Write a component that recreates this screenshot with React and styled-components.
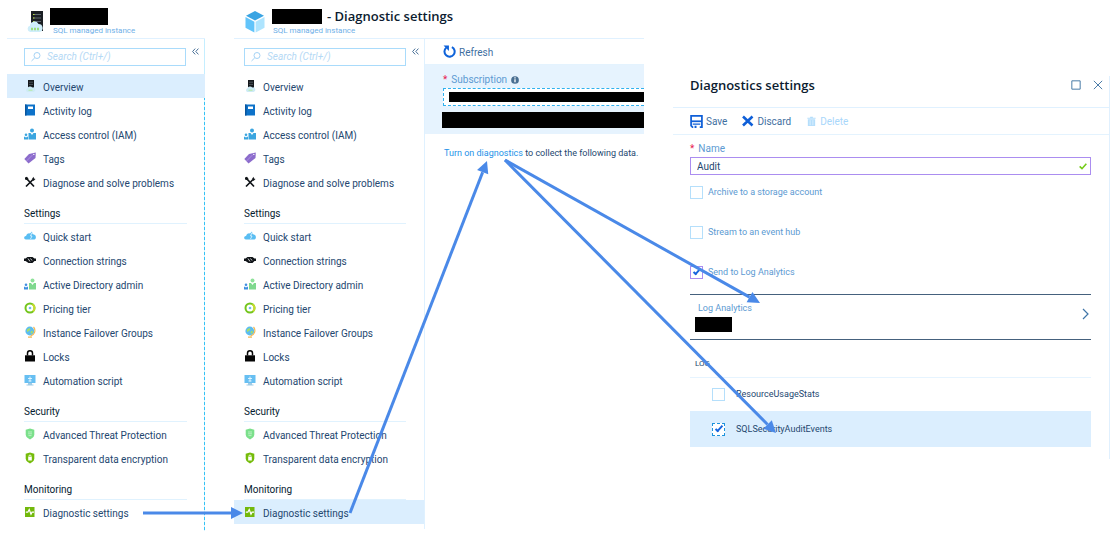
import React from "react";
import styled, { createGlobalStyle, css } from "styled-components";

const GlobalStyle = createGlobalStyle`
  *, *::before, *::after { box-sizing: border-box; }
  body {
    margin: 0;
    background: #fff;
    color: #24476f;
    font-family: Roboto, "Open Sans", sans-serif;
    font-size: 10px;
    line-height: 14px;
  }
  button, input { font: inherit; color: inherit; }
  a { color: inherit; text-decoration: none; }
  svg { display: block; flex: none; }
`;

const Page = styled.main`
  position: relative;
  display: flex;
  align-items: flex-start;
  gap: 29px;
  min-height: 537px;
  padding: 0 6px 0 7px;
`;

const Blade = styled.section`
  flex: ${(p) => p.$grow || 0} 0 ${(p) => p.$basis || "auto"};
  min-width: 0;
`;

const BladeHeader = styled.header`
  display: flex;
  gap: 7px;
  height: 39px;
  padding: ${(p) => p.$pad};
  border-bottom: 1px solid #e0f1ff;
`;

const HeaderIcon = styled.div`
  padding-top: 4px;
`;

const HeaderText = styled.div`
  display: flex;
  flex-direction: column;
`;

const TitleLine = styled.div`
  display: flex;
  align-items: center;
  gap: 5px;
  height: 18px;
`;

const Title = styled.h1`
  margin: 0;
  color: #0c1c30;
  font-family: "Open Sans", "Noto Sans", sans-serif;
  font-size: 13px;
  line-height: 18px;
  font-weight: 600;
  white-space: nowrap;
`;

const Subtitle = styled.p`
  margin: 0;
  padding-left: ${(p) => p.$indent}px;
  color: #6fb0e8;
  font-size: 8px;
  line-height: 12px;
`;

const Redacted = styled.span`
  display: block;
  width: ${(p) => p.$w}px;
  height: ${(p) => p.$h}px;
  background: #000;
`;

const MenuColumn = styled.nav`
  position: relative;
  flex: 0 0 ${(p) => p.$w}px;
  height: ${(p) => p.$h}px;
  border-right: 1px solid #dff1ff;
  ${(p) =>
    p.$dashed &&
    css`
      border-right: 0;
      background:
        linear-gradient(#c5eeff, #c5eeff) right 0 top 0 / 1px 53px no-repeat,
        repeating-linear-gradient(#35c3f5 0 3px, #d5f3ff 3px 5px) right 0 top 53px / 1px 100% no-repeat;
    `}
`;

const SearchRow = styled.div`
  display: flex;
  align-items: flex-start;
  gap: 6px;
  height: 35px;
  padding: 9px 0 0 ${(p) => p.$left}px;
`;

const SearchBox = styled.label`
  display: flex;
  align-items: center;
  gap: 5px;
  width: 162px;
  height: 18px;
  padding: 0 5px;
  border: 1px solid #a9dbfb;
`;

const SearchInput = styled.input`
  width: 100%;
  min-width: 0;
  padding: 0;
  border: 0;
  outline: 0;
  background: none;
  &::placeholder { color: #b5d9f5; font-style: italic; opacity: 1; }
`;

const PlainButton = styled.button`
  display: flex;
  align-items: center;
  gap: ${(p) => p.$gap || 0}px;
  padding: 0;
  border: 0;
  background: none;
  color: ${(p) => (p.disabled ? "#a8d7fb" : "#3f6f9f")};
`;

const ButtonText = styled.span`
  padding-top: 2px;
`;

const MenuList = styled.ul`
  margin: 0;
  padding: 0;
  list-style: none;
`;

const MenuLink = styled.a`
  display: flex;
  align-items: center;
  gap: 7px;
  height: 24px;
  padding-left: ${(p) => p.$left}px;
  background: ${(p) => (p.$active ? "#dbeefe" : "none")};
  white-space: nowrap;
`;

const MenuText = styled.span`
  padding-top: 3px;
`;

const MenuHeading = styled.h2`
  height: 30px;
  margin: 0 18px 0 ${(p) => p.$left}px;
  padding-top: 13px;
  border-bottom: 1px solid #e0f2fe;
  color: #061b30;
  font-size: 10px;
  line-height: 14px;
  font-weight: 400;
`;

const Columns = styled.div`
  display: flex;
`;

const Content = styled.div`
  flex: 1;
  min-width: 0;
`;

const Toolbar = styled.div`
  display: flex;
  align-items: center;
  gap: 15px;
  height: ${(p) => p.$h}px;
  padding-left: ${(p) => p.$left}px;
  border-bottom: 1px solid #e4f3fe;
`;

const SubscriptionArea = styled.div`
  display: flex;
  flex-direction: column;
  height: 69px;
  padding: 8px 0 6px 18px;
  background: #e6f3fe;
`;

const FieldLabel = styled.label`
  display: flex;
  align-items: center;
  gap: 4px;
  height: 14px;
  color: #5c9ad2;
  line-height: 14px;
`;

const Required = styled.span`
  color: #e8174f;
`;

const SubscriptionBox = styled.div`
  height: 18px;
  margin: 1px 0 6px;
  padding: 3px 0 3px 5px;
  border: 1px dashed #2fb1ef;
  border-right: 0;
  background: #fff;
`;

const SubscriptionInput = styled.input`
  display: block;
  width: 100%;
  height: 10px;
  padding: 0;
  border: 0;
  background: #000;
`;

const RedactedBar = styled.div`
  flex: 1;
  margin-left: -1px;
  background: #000;
`;

const Message = styled.p`
  margin: 12px 0 0;
  padding-left: 19px;
  font-size: 9px;
  line-height: 14px;
  white-space: nowrap;
  a { color: #2492e8; }
`;

const SettingsBlade = styled(Blade)`
  height: 383px;
  margin-top: 76px;
  border-right: 1px solid #e0f0fe;
`;

const SettingsHeader = styled.header`
  display: flex;
  align-items: center;
  gap: 12px;
  height: 32px;
  padding: 0 6px 13px 17px;
  border-bottom: 1px solid #e0f1ff;
`;

const HeaderSpacer = styled.span`
  flex: 1;
`;

const Form = styled.form`
  padding: 7px 18px 0 17px;
`;

const NameBox = styled.div`
  display: flex;
  align-items: center;
  height: 18px;
  margin-top: 1px;
  padding: 0 3px 0 6px;
  border: 1px solid #ab8df0;
`;

const NameInput = styled.input`
  flex: 1;
  min-width: 0;
  padding: 1px 0 0;
  border: 0;
  outline: 0;
  background: none;
`;

const CheckLabel = styled.label`
  display: flex;
  align-items: center;
  gap: ${(p) => p.$gap || 5}px;
  color: ${(p) => (p.$dark ? "#24476f" : "#5c9ad2")};
  font-size: 9px;
`;

const CheckList = styled.div`
  display: flex;
  flex-direction: column;
  gap: 26px;
  padding: 10px 0 15px;
`;

const CheckBox = styled.input.attrs({ type: "checkbox" })`
  appearance: none;
  width: 13px;
  height: 13px;
  margin: 0;
  border: 1px ${(p) => p.$line || "solid"} ${(p) => p.$color || "#b5dffb"};
  background: #fff;
  &:checked::before {
    content: "";
    display: block;
    width: 4px;
    height: 8px;
    margin: 0 0 0 4px;
    border: solid #1765de;
    border-width: 0 2px 2px 0;
    transform: rotate(42deg);
  }
`;

const Workspace = styled.a`
  display: flex;
  align-items: center;
  justify-content: space-between;
  height: 46px;
  padding: 0 0 6px 5px;
  border: solid #45617d;
  border-width: 1px 0;
  color: #5c9ad2;
  font-size: 9px;
`;

const WorkspaceText = styled.span`
  display: flex;
  flex-direction: column;
  gap: 2px;
  padding-top: 6px;
  line-height: 13px;
`;

const WorkspaceName = styled.span`
  padding-left: 3px;
`;

const LogTable = styled.table`
  width: 100%;
  border-collapse: collapse;
  th {
    height: 37px;
    padding: 12px 0 0 5px;
    border-bottom: 1px solid #e6f4ff;
    color: #24476f;
    font-size: 8px;
    font-weight: 400;
    line-height: 14px;
    text-align: left;
  }
`;

const LogCell = styled.td`
  height: ${(p) => (p.$active ? 36 : 34)}px;
  padding: 0 0 0 22px;
  background: ${(p) => (p.$active ? "#dbeefe" : "none")};
`;

const Arrows = styled.svg`
  position: absolute;
  inset: 0;
  width: 100%;
  height: 537px;
  pointer-events: none;
`;

const Svg = ({ size = 12, children }) => (
  <svg width={size} height={size} viewBox="0 0 12 12" fill="none" aria-hidden="true">
    {children}
  </svg>
);

const icons = {
  server: (
    <Svg>
      <path d="M4 0h6v8H4z" fill="#15181c" />
      <path d="M5 2.200h4M5 4.400h4" stroke="#6f7881" strokeWidth=".6" />
      <path d="M3.500 12a1.900 1.900 0 0 1 0-3.700A2.800 2.800 0 0 1 8.300 7.400a2.300 2.300 0 0 1 1.200 4.600z" fill="#cdebf6" />
      <path d="M4.500 10.200h4" stroke="#b5e8a0" />
    </Svg>
  ),
  log: (
    <Svg>
      <path d="M1 .5h10v11H1z" fill="#0d72c9" />
      <path d="M1 .5h1.500v11H1z" fill="#0a559d" />
      <path d="M4 2.500h5v2.500H4z" fill="#fff" />
    </Svg>
  ),
  iam: (
    <Svg>
      <circle cx="8" cy="2.500" r="2" fill="#3ba5df" />
      <path d="M4.500 5h2L8 7l1.500-2H12v6.500H4.500z" fill="#3ba5df" />
      <circle cx="2" cy="6.800" r="1.300" fill="#3ba5df" />
      <path d="M0 8.800h1.200l.8 1 .8-1H4v2.700H0z" fill="#3ba5df" />
    </Svg>
  ),
  tag: (
    <Svg>
      <path d="M5 2 11.800.5 11.500 6 4.500 11.500.3 7z" fill="#8c6ccc" />
      <path d="m2.500 9 6-6" stroke="#b49be6" strokeWidth=".8" />
      <circle cx="9.800" cy="2.400" r=".7" fill="#fff" />
    </Svg>
  ),
  tools: (
    <Svg>
      <path d="m2 10.500 7-7M3 3l7 7.500" stroke="#101418" strokeWidth="1.700" />
      <path d="M1 1.500 3 .8l1.500 2L3.300 4.300 1 3.500zM8 3 9.500.8l.5 1.700 1.500.5L9.500 5z" fill="#101418" />
    </Svg>
  ),
  quick: (
    <Svg>
      <path d="M1.800 9.500a1.800 1.800 0 0 1 .3-3.600A3 3 0 0 1 6 3.500l2-2 .5 2.500 2.500 1c1.500 1.500 1 4.500-.6 4.500z" fill="#59bdf2" />
      <path d="M8 2.500 6.500 6H8L6.500 9" stroke="#eaf8ff" strokeWidth=".8" />
    </Svg>
  ),
  plug: (
    <Svg>
      <path d="M0 4.500h1.500l2-1.500h5l2 1.500H12V7h-1.500l-2 2h-4L1.500 7H0z" fill="#101418" />
      <path d="M4 4.500 6 7.500M6.500 4.500l1.500 2" stroke="#fff" strokeWidth=".8" />
    </Svg>
  ),
  directory: (
    <Svg>
      <circle cx="8.500" cy="2.500" r="2" fill="#8fe29a" />
      <path d="M5 5h2l1.500 2L10 5h2v6.500H5z" fill="#7fd88e" />
      <circle cx="2" cy="6.800" r="1.300" fill="#3f8fe0" />
      <path d="M0 8.800h1.200l.8 1 .8-1H4v2.700H0z" fill="#3f8fe0" />
    </Svg>
  ),
  pricing: (
    <Svg>
      <circle cx="6" cy="6" r="4.500" stroke="#74c51d" strokeWidth="2" />
      <path d="M8.500 2.300A4.500 4.500 0 0 1 9 9.300" stroke="#c9dd2d" strokeWidth="2" />
      <circle cx="6" cy="6" r="1.300" fill="#6cbfe9" />
    </Svg>
  ),
  globe: (
    <Svg>
      <circle cx="5.800" cy="5" r="4.400" fill="#5cbcf0" />
      <path d="M3 3.500 5.500 2l1 1.500L5 5l-2 1zM6.500 5.500l2-1 .5 2-2 1.500z" fill="#a5dd6a" />
      <path d="M9.500 1a5.500 5.500 0 0 1-3 9M4 11.200h4" stroke="#f3b957" strokeWidth="1.200" />
    </Svg>
  ),
  lock: (
    <Svg>
      <path d="M3.500 5.500V3.300a2.500 2.500 0 0 1 5 0v2.200" stroke="#050505" strokeWidth="1.500" />
      <path d="M1 5.300h10v6.200H1z" fill="#050505" />
    </Svg>
  ),
  script: (
    <Svg>
      <path d="M.5 1h11v8H.5z" fill="#67bff2" />
      <path d="M4 9h4v1.500h1.500v1h-7v-1H4z" fill="#9fcbe5" />
      <path d="M6 2.500v5M4 4.500h4M4.500 7h3" stroke="#e9f8ff" strokeWidth=".9" />
    </Svg>
  ),
  threat: (
    <Svg>
      <path d="M6 .5 10.300 1.800v4.700c0 2.500-2.300 3.900-4.300 4.900-2-1-4.300-2.400-4.300-4.900V1.800z" fill="#7be08b" />
      <path d="M4 4h4M4 5.800h4M4.500 7.600h3" stroke="#c9f5cf" strokeWidth=".8" />
    </Svg>
  ),
  encryption: (
    <Svg>
      <path d="M6 .5 10.300 1.800v4.700c0 2.500-2.300 3.900-4.300 4.900-2-1-4.300-2.400-4.300-4.900V1.800z" fill="#76bc0b" />
      <path d="M4.200 5h3.600v3.500H4.200z" fill="#fff" />
      <path d="M5 5V4a1 1 0 0 1 2 0v1" stroke="#fff" strokeWidth=".9" />
    </Svg>
  ),
  diagnostics: (
    <Svg>
      <path d="M1 1h9.500v10H1z" fill="#72b80b" />
      <path d="M1.800 6.200h2L5.200 3.500 7 8.300l1-2.100h2" stroke="#fff" strokeWidth="1.200" />
    </Svg>
  ),
  search: (
    <Svg>
      <circle cx="7" cy="4.500" r="3" stroke="#a5d3f5" />
      <path d="M4.800 6.800 1.500 10" stroke="#a5d3f5" />
    </Svg>
  ),
  refresh: (
    <Svg size={13}>
      <path d="M8.200 1.900A4.700 4.700 0 1 1 3 2.500" stroke="#0f63da" strokeWidth="1.900" />
      <path d="M.5.500h5v5z" fill="#0f63da" />
    </Svg>
  ),
  info: (
    <Svg size={8}>
      <circle cx="6" cy="6" r="5.800" fill="#496f92" />
      <path d="M6 5v4.500M6 2v1.600" stroke="#fff" strokeWidth="2" />
    </Svg>
  ),
  save: (
    <Svg size={13}>
      <path d="M1 .8h10v10.400H2.300L1 9.800z" stroke="#0f5fd8" strokeWidth="1.600" />
      <path d="M1 5.800h10" stroke="#0f5fd8" strokeWidth="1.600" />
      <path d="M3 9h6v3H3z" fill="#fff" />
      <path d="M2.500 7.800h7V9h-7zM4.200 10h1.800v2H4.200z" fill="#0f5fd8" />
    </Svg>
  ),
  discard: (
    <Svg>
      <path d="m1 1.500 9.500 9M10.500 1.500l-9.500 9" stroke="#0f5fd8" strokeWidth="2.600" />
    </Svg>
  ),
  trash: (
    <Svg size={11}>
      <path d="M2 3.500h8V11H2zM1.500 1.800h9V3h-9zM4.500.8h3v1h-3z" fill="#b5defb" />
      <path d="M4.500 4.500V10M7.500 4.500V10" stroke="#e6f5ff" strokeWidth=".8" />
    </Svg>
  ),
  collapse: (
    <Svg size={7}>
      <path d="M5.500 1 1 6l4.500 5M11 1 6.500 6l4.500 5" stroke="#3c6690" strokeWidth="1.600" />
    </Svg>
  ),
  maximize: (
    <Svg size={10}>
      <path d="M1 1h10v10H1z" stroke="#4a7ca8" strokeWidth="1.200" />
    </Svg>
  ),
  close: (
    <Svg size={10}>
      <path d="m1 1 10 10M11 1 1 11" stroke="#4a7ca8" strokeWidth="1.200" />
    </Svg>
  ),
  valid: (
    <Svg size={8}>
      <path d="M1 6.500 4.500 10 11 2.500" stroke="#74cc18" strokeWidth="2.400" />
    </Svg>
  ),
  chevron: (
    <Svg>
      <path d="m4 1 5 5-5 5" stroke="#3f75a8" strokeWidth="1.200" />
    </Svg>
  ),
  cube: (
    <svg width="20" height="22" viewBox="0 0 20 22" aria-hidden="true">
      <path d="M10 0 19 4.700 10 9.400 1 4.700z" fill="#3aa4e3" />
      <path d="M.5 6 9.400 10.700V21.500L.5 16.800z" fill="#62c4fa" />
      <path d="M19.500 6 10.600 10.700V21.500l8.900-4.700z" fill="#aee4fe" />
    </svg>
  ),
  instance: (
    <svg width="16" height="22" viewBox="0 0 16 22" aria-hidden="true">
      <path d="M4 0h12v20H4z" fill="#1b1f24" />
      <path d="M6 3.500h8M6 7h8M6 10.500h8" stroke="#5f6972" />
      <path d="M6 3.500h1.500M6 7h1.500M6 10.500h1.500" stroke="#b9dc3d" />
      <path d="M3.200 21a3.200 3.200 0 0 1-.3-6.200A4.600 4.600 0 0 1 11.500 13 4.100 4.100 0 0 1 12.800 21z" fill="#cfeefa" />
      <path d="M4 18h8" stroke="#9be07c" strokeWidth="2.400" strokeDasharray="2 1" />
    </svg>
  ),
};

const menu = [
  {
    items: [
      ["server", "Overview"],
      ["log", "Activity log"],
      ["iam", "Access control (IAM)"],
      ["tag", "Tags"],
      ["tools", "Diagnose and solve problems"],
    ],
  },
  {
    heading: "Settings",
    items: [
      ["quick", "Quick start"],
      ["plug", "Connection strings"],
      ["directory", "Active Directory admin"],
      ["pricing", "Pricing tier"],
      ["globe", "Instance Failover Groups"],
      ["lock", "Locks"],
      ["script", "Automation script"],
    ],
  },
  {
    heading: "Security",
    items: [
      ["threat", "Advanced Threat Protection"],
      ["encryption", "Transparent data encryption"],
    ],
  },
  { heading: "Monitoring", items: [["diagnostics", "Diagnostic settings"]] },
];

function ResourceMenu({ active, left, width, height, dashed }) {
  return (
    <MenuColumn $w={width} $h={height} $dashed={dashed} aria-label="Resource menu">
      <SearchRow $left={left}>
        <SearchBox>
          {icons.search}
          <SearchInput type="search" aria-label="Search" placeholder="Search (Ctrl+/)" />
        </SearchBox>
        <PlainButton type="button" aria-label="Collapse menu">
          {icons.collapse}
        </PlainButton>
      </SearchRow>
      {menu.map((group) => (
        <React.Fragment key={group.heading || "general"}>
          {group.heading && <MenuHeading $left={left}>{group.heading}</MenuHeading>}
          <MenuList>
            {group.items.map(([icon, label]) => (
              <li key={label}>
                <MenuLink href="#" $left={left} $active={label === active}>
                  {icons[icon]}
                  <MenuText>{label}</MenuText>
                </MenuLink>
              </li>
            ))}
          </MenuList>
        </React.Fragment>
      ))}
    </MenuColumn>
  );
}

function Arrow({ from, to }) {
  const angle = Math.atan2(to[1] - from[1], to[0] - from[0]);
  const head = 12;
  const half = 6;
  const bx = to[0] - head * Math.cos(angle);
  const by = to[1] - head * Math.sin(angle);
  const px = half * Math.sin(angle);
  const py = half * Math.cos(angle);
  return (
    <g>
      <line x1={from[0]} y1={from[1]} x2={bx} y2={by} stroke="#4a89e8" strokeWidth="3" />
      <polygon points={`${to[0]},${to[1]} ${bx - px},${by + py} ${bx + px},${by - py}`} fill="#4a89e8" />
    </g>
  );
}

export default function App() {
  return (
    <>
      <GlobalStyle />
      <Page>
        <Blade $basis="198px">
          <BladeHeader $pad="7px 0 0 20px">
            <HeaderIcon>{icons.instance}</HeaderIcon>
            <HeaderText>
              <TitleLine>
                <Redacted $w={58} $h={17} />
              </TitleLine>
              <Subtitle $indent={3}>SQL managed instance</Subtitle>
            </HeaderText>
          </BladeHeader>
          <ResourceMenu active="Overview" left={17} width={198} height={492} dashed />
        </Blade>

        <Blade $basis="410px">
          <BladeHeader $pad="7px 0 0 11px">
            <HeaderIcon>{icons.cube}</HeaderIcon>
            <HeaderText>
              <TitleLine>
                <Redacted $w={50} $h={15} />
                <Title>- Diagnostic settings</Title>
              </TitleLine>
              <Subtitle $indent={1}>SQL managed instance</Subtitle>
            </HeaderText>
          </BladeHeader>
          <Columns>
            <ResourceMenu active="Diagnostic settings" left={10} width={191} height={490} />
            <Content>
              <Toolbar $h={26} $left={18}>
                <PlainButton type="button" $gap={3}>
                  {icons.refresh}
                  <ButtonText>Refresh</ButtonText>
                </PlainButton>
              </Toolbar>
              <SubscriptionArea>
                <FieldLabel htmlFor="subscription">
                  <Required>*</Required>
                  Subscription
                  {icons.info}
                </FieldLabel>
                <SubscriptionBox>
                  <SubscriptionInput id="subscription" readOnly />
                </SubscriptionBox>
                <RedactedBar />
              </SubscriptionArea>
              <Message>
                <a href="#">Turn on diagnostics</a> to collect the following data.
              </Message>
            </Content>
          </Columns>
        </Blade>

        <SettingsBlade $grow={1} $basis="0">
          <SettingsHeader>
            <Title as="h2">Diagnostics settings</Title>
            <HeaderSpacer />
            <PlainButton type="button" aria-label="Maximize">
              {icons.maximize}
            </PlainButton>
            <PlainButton type="button" aria-label="Close">
              {icons.close}
            </PlainButton>
          </SettingsHeader>
          <Toolbar $h={27} $left={17}>
            <PlainButton type="button" $gap={3}>
              {icons.save}
              <ButtonText>Save</ButtonText>
            </PlainButton>
            <PlainButton type="button" $gap={3}>
              {icons.discard}
              <ButtonText>Discard</ButtonText>
            </PlainButton>
            <PlainButton type="button" $gap={3} disabled>
              {icons.trash}
              <ButtonText>Delete</ButtonText>
            </PlainButton>
          </Toolbar>
          <Form>
            <FieldLabel htmlFor="name">
              <Required>*</Required>
              Name
            </FieldLabel>
            <NameBox>
              <NameInput id="name" type="text" defaultValue="Audit" />
              {icons.valid}
            </NameBox>
            <CheckList>
              <CheckLabel>
                <CheckBox />
                Archive to a storage account
              </CheckLabel>
              <CheckLabel>
                <CheckBox />
                Stream to an event hub
              </CheckLabel>
              <CheckLabel>
                <CheckBox defaultChecked $color="#ab8df0" />
                Send to Log Analytics
              </CheckLabel>
            </CheckList>
            <Workspace href="#">
              <WorkspaceText>
                <WorkspaceName>Log Analytics</WorkspaceName>
                <Redacted $w={37} $h={15} />
              </WorkspaceText>
              {icons.chevron}
            </Workspace>
            <LogTable>
              <thead>
                <tr>
                  <th scope="col">LOG</th>
                </tr>
              </thead>
              <tbody>
                <tr>
                  <LogCell>
                    <CheckLabel $gap={11} $dark>
                      <CheckBox />
                      ResourceUsageStats
                    </CheckLabel>
                  </LogCell>
                </tr>
                <tr>
                  <LogCell $active>
                    <CheckLabel $gap={11} $dark>
                      <CheckBox defaultChecked $line="dashed" $color="#1d93dd" />
                      SQLSecurityAuditEvents
                    </CheckLabel>
                  </LogCell>
                </tr>
              </tbody>
            </LogTable>
          </Form>
        </SettingsBlade>

        <Arrows viewBox="0 0 1116 537" preserveAspectRatio="none" aria-hidden="true">
          <Arrow from={[143, 513]} to={[243, 513]} />
          <Arrow from={[350, 513]} to={[487, 161]} />
          <Arrow from={[505, 160]} to={[760, 303]} />
          <Arrow from={[505, 160]} to={[776, 433]} />
        </Arrows>
      </Page>
    </>
  );
}
